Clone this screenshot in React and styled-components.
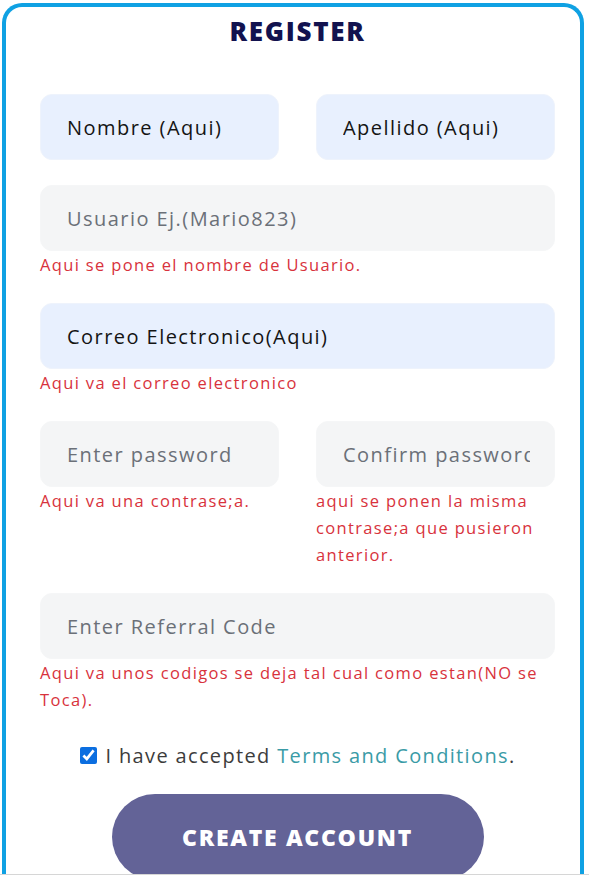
import React from "react";
import styled, { createGlobalStyle } from "styled-components";

const GlobalStyle = createGlobalStyle`
  html, body { margin: 0; padding: 0; background: #ffffff; }
  body { font-family: "Open Sans", "Liberation Sans", sans-serif; overflow: hidden; }
  * { box-sizing: border-box; }
`;

const Page = styled.div`
  padding: 3px 5px 0 2px;
  height: 877px;
  overflow: hidden;
  position: relative;
`;

const Frame = styled.div`
  width: 582px;
  border: 4.5px solid #0fa1e3;
  border-bottom: none;
  border-radius: 20px 20px 0 0;
  padding: 6px 25px 0 34px;
  min-height: 900px;
`;

const Title = styled.h1`
  margin: 0 0 45px;
  text-align: center;
  font-size: 26px;
  line-height: 36px;
  font-weight: 800;
  color: #12124f;
  letter-spacing: 1.7px;
`;

const Form = styled.form`
  display: flex;
  flex-direction: column;
  gap: 25px;
`;

const Row = styled.div`
  display: grid;
  grid-template-columns: 1fr 1fr;
  column-gap: 37px;
`;

const Group = styled.div`
  display: flex;
  flex-direction: column;
  min-width: 0;
`;

const Field = styled.input`
  width: 100%;
  height: 66px;
  border-radius: 12px;
  border: 1.5px solid ${(p) => (p.$filled ? "#eef3fc" : "#f5f6f7")};
  background: ${(p) => (p.$filled ? "#e8f0fe" : "#f4f5f6")};
  padding: 0 24px 0 26px;
  font-family: "Open Sans", "Liberation Sans", sans-serif;
  font-size: 20px;
  letter-spacing: 1.45px;
  color: #141414;
  outline: none;
  &::placeholder { color: #6b7078; opacity: 1; }
`;

const ErrorText = styled.div`
  color: #d8323c;
  font-size: 16.5px;
  letter-spacing: 1.35px;
  line-height: 27px;
`;

const CheckRow = styled.label`
  display: flex;
  align-items: center;
  justify-content: center;
  gap: 9px;
  margin-top: 4px;
  font-size: 20px;
  letter-spacing: 1.35px;
  color: #3c3c3c;
`;

const Check = styled.input`
  width: 17px;
  height: 17px;
  margin: 0;
  accent-color: #0b6ee0;
`;

const Link = styled.a`
  color: #3a9ba6;
  text-decoration: none;
`;

const Submit = styled.button`
  align-self: center;
  width: 372px;
  height: 86px;
  margin-top: 0;
  border: none;
  border-radius: 43px;
  background: #636397;
  color: #ffffff;
  font-family: "Open Sans", "Liberation Sans", sans-serif;
  font-weight: 800;
  font-size: 23px;
  letter-spacing: 1.7px;
`;

const BottomEdge = styled.div`
  position: absolute;
  left: 0;
  right: 0;
  top: 874px;
  height: 3px;
  background: #ffffff;
  border-top: 1px solid #d6d6d6;
`;

export default function App() {
  return (
    <>
      <GlobalStyle />
      <Page>
        <Frame>
          <Title>REGISTER</Title>
          <Form onSubmit={(e) => e.preventDefault()}>
            <Row>
              <Group>
                <Field $filled readOnly value="Nombre (Aqui)" />
              </Group>
              <Group>
                <Field $filled readOnly value="Apellido (Aqui)" />
              </Group>
            </Row>
            <Group>
              <Field placeholder="Usuario Ej.(Mario823)" />
              <ErrorText>Aqui se pone el nombre de Usuario.</ErrorText>
            </Group>
            <Group>
              <Field $filled readOnly value="Correo Electronico(Aqui)" />
              <ErrorText>Aqui va el correo electronico</ErrorText>
            </Group>
            <Row>
              <Group>
                <Field type="password" placeholder="Enter password" />
                <ErrorText>Aqui va una contrase;a.</ErrorText>
              </Group>
              <Group>
                <Field type="password" placeholder="Confirm password" />
                <ErrorText>aqui se ponen la misma contrase;a que pusieron anterior.</ErrorText>
              </Group>
            </Row>
            <Group>
              <Field placeholder="Enter Referral Code" />
              <ErrorText>Aqui va unos codigos se deja tal cual como estan(NO se Toca).</ErrorText>
            </Group>
            <CheckRow>
              <Check type="checkbox" defaultChecked />
              <span>
                I have accepted <Link href="#">Terms and Conditions</Link>.
              </span>
            </CheckRow>
            <Submit type="submit">CREATE ACCOUNT</Submit>
          </Form>
        </Frame>
        <BottomEdge />
      </Page>
    </>
  );
}
